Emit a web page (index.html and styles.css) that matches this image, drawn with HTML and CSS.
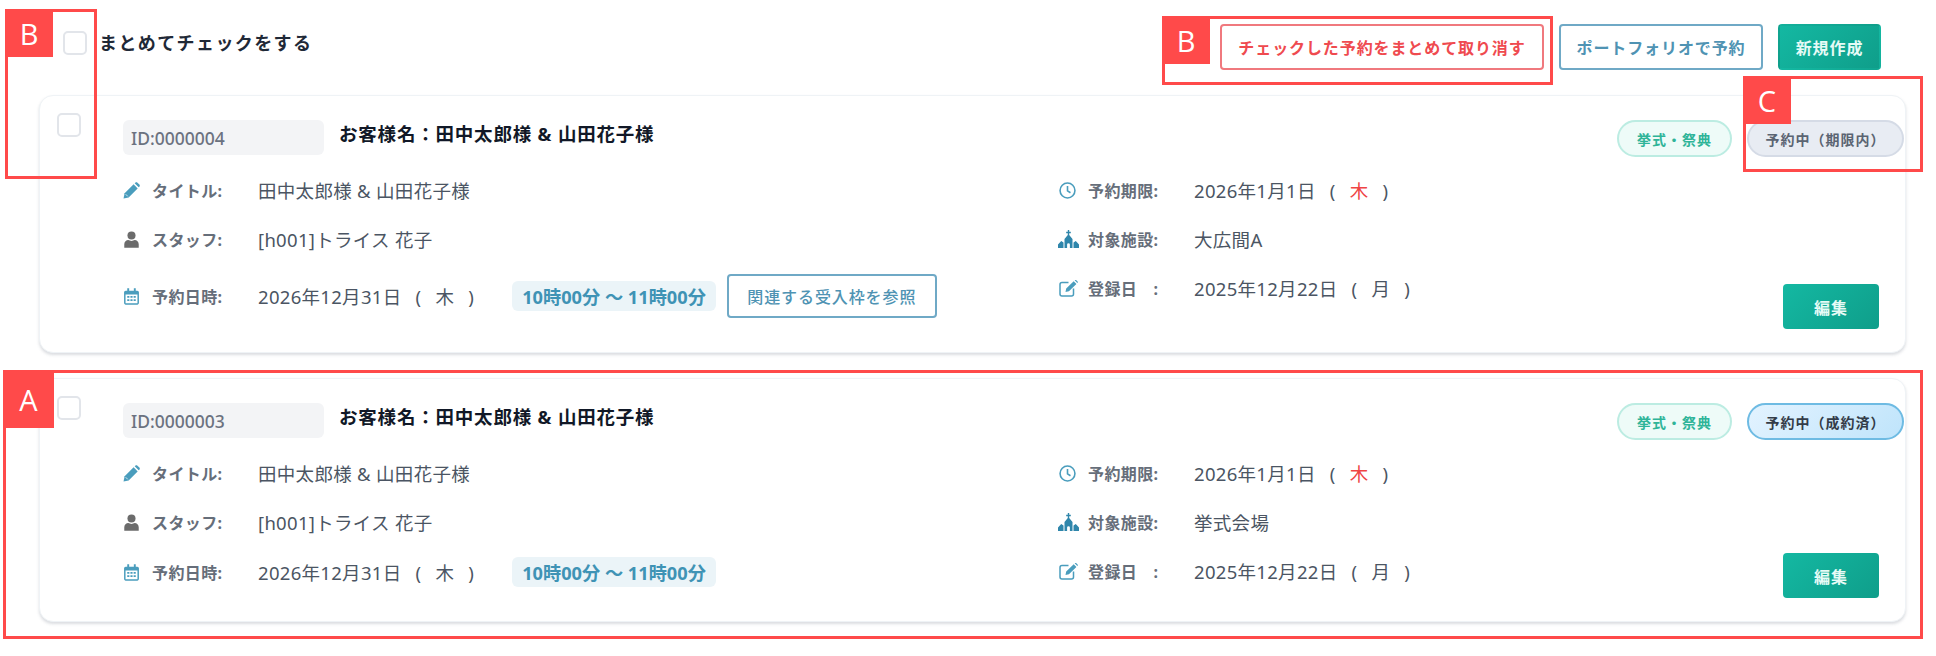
FILE: index.html
```html
<!DOCTYPE html>
<html lang="ja">
<head>
    <meta charset="UTF-8">
    <title>予約一覧</title>
    <link rel="stylesheet" href="styles.css">
</head>
<body>
    <svg class="sprite" xmlns="http://www.w3.org/2000/svg">
        <symbol id="i-pencil" viewBox="0 0 16 16">
            <path d="M.5 15.500l1-4.800L10 2.200l3.800 3.800-8.500 8.500z"/>
            <path d="M11 1.200l.6-.6c.6-.6 1.400-.6 2 0l1.800 1.800c.6.6.6 1.400 0 2l-.6.6z"/>
            <path d="M2.500 11.500l2 2" fill="none" stroke="#ffffff" stroke-width=".7"/>
        </symbol>
        <symbol id="i-user" viewBox="0 0 16 16">
            <circle cx="8" cy="4.200" r="3.800"/>
            <path d="M1.200 15.800v-3.300c0-2.400 1.800-4 3.800-4 .9.500 1.900.8 3 .8s2.100-.3 3-.8c2 0 3.800 1.600 3.800 4v3.300z"/>
        </symbol>
        <symbol id="i-calendar" viewBox="0 0 16 16">
            <path d="M4 .3h1.800v2.200H10.200V.3H12v2.200h1.500c.8 0 1.500.7 1.500 1.500v10.200c0 .8-.7 1.500-1.500 1.500h-11c-.8 0-1.500-.7-1.500-1.500V4c0-.8.700-1.500 1.500-1.500H4zM2.400 6.200v8.100h11.200V6.200z"/>
            <path d="M4 7.500h2v1.600H4zM7 7.500h2v1.600H7zM10 7.500h2v1.600h-2zM4 10.700h2v1.600H4zM7 10.700h2v1.600H7zM10 10.700h2v1.600h-2z"/>
        </symbol>
        <symbol id="i-clock" viewBox="0 0 16 16">
            <circle cx="8" cy="8" r="7" fill="none" stroke="currentColor" stroke-width="1.500"/>
            <path d="M8 3.800v4.500l2.800 1.800" fill="none" stroke="currentColor" stroke-width="1.500"/>
        </symbol>
        <symbol id="i-church" viewBox="0 0 21 18">
            <path d="M9.800 0h1.400v1.800h1.600v1.400h-1.600v1.700L14.500 9v9h-2.600v-3.400a1.400 1.400 0 0 0-2.800 0V18H6.500V9l3.300-4.100V3.200H8.200V1.800h1.600z"/>
            <path d="M0 14.500l3.200-3.500 2.300 1.500V18H0zM21 14.500L17.800 11l-2.300 1.500V18H21z"/>
        </symbol>
        <symbol id="i-edit" viewBox="0 0 19 17">
            <path d="M9.500 2.500H3C1.900 2.500 1 3.400 1 4.500V14c0 1.100.9 2 2 2h9.500c1.100 0 2-.9 2-2V8.500" fill="none" stroke="currentColor" stroke-width="1.500"/>
            <path d="M6.500 12l.7-3.400L14.700 1.200l2.700 2.700L9.900 11.300zM15.700.3l.4-.2c.4-.3.900-.2 1.200.1l1.300 1.300c.3.400.3.900 0 1.200l-.3.300z"/>
        </symbol>
    </svg>

    <main class="page">
        <div class="top-bar">
            <label class="check-all">
                <span class="check"></span>
                <span>まとめてチェックをする</span>
            </label>
            <div class="top-actions">
                <button class="btn btn-danger">チェックした予約をまとめて取り消す</button>
                <button class="btn btn-outline">ポートフォリオで予約</button>
                <button class="btn btn-primary">新規作成</button>
            </div>
        </div>

        <section class="card">
            <span class="check card-check"></span>
            <div class="card-main">
                <div class="card-head">
                    <span class="res-id">ID:0000004</span>
                    <h2 class="customer">お客様名&#xFF1A;田中太郎様 &amp; 山田花子様</h2>
                    <div class="badges">
                        <span class="badge badge-type">挙式・祭典</span>
                        <span class="badge badge-wait">予約中&#xFF08;期限内&#xFF09;</span>
                    </div>
                </div>
                <div class="card-body">
                    <div class="col">
                        <div class="row">
                            <svg class="ico ico-blue"><use href="#i-pencil"></use></svg>
                            <span class="label">タイトル:</span>
                            <span class="value">田中太郎様 &amp; 山田花子様</span>
                        </div>
                        <div class="row">
                            <svg class="ico ico-gray"><use href="#i-user"></use></svg>
                            <span class="label">スタッフ:</span>
                            <span class="value">[h001]トライス 花子</span>
                        </div>
                        <div class="row row-time">
                            <svg class="ico ico-blue"><use href="#i-calendar"></use></svg>
                            <span class="label">予約日時:</span>
                            <span class="value">2026年12月31日<span class="week">( 木 )</span></span>
                            <span class="time-pill">10時00分 〜 11時00分</span>
                            <button class="btn btn-outline btn-related">関連する受入枠を参照</button>
                        </div>
                    </div>
                    <div class="col">
                        <div class="row">
                            <svg class="ico ico-blue"><use href="#i-clock"></use></svg>
                            <span class="label">予約期限:</span>
                            <span class="value">2026年1月1日<span class="week">( <span class="red">木</span> )</span></span>
                        </div>
                        <div class="row">
                            <svg class="ico ico-church"><use href="#i-church"></use></svg>
                            <span class="label">対象施設:</span>
                            <span class="value">大広間A</span>
                        </div>
                        <div class="row">
                            <svg class="ico ico-blue ico-edit"><use href="#i-edit"></use></svg>
                            <span class="label">登録日&#x3000;:</span>
                            <span class="value">2025年12月22日<span class="week">( 月 )</span></span>
                        </div>
                    </div>
                    <button class="btn btn-primary btn-edit">編集</button>
                </div>
            </div>
        </section>

        <section class="card">
            <span class="check card-check"></span>
            <div class="card-main">
                <div class="card-head">
                    <span class="res-id">ID:0000003</span>
                    <h2 class="customer">お客様名&#xFF1A;田中太郎様 &amp; 山田花子様</h2>
                    <div class="badges">
                        <span class="badge badge-type">挙式・祭典</span>
                        <span class="badge badge-done">予約中&#xFF08;成約済&#xFF09;</span>
                    </div>
                </div>
                <div class="card-body">
                    <div class="col">
                        <div class="row">
                            <svg class="ico ico-blue"><use href="#i-pencil"></use></svg>
                            <span class="label">タイトル:</span>
                            <span class="value">田中太郎様 &amp; 山田花子様</span>
                        </div>
                        <div class="row">
                            <svg class="ico ico-gray"><use href="#i-user"></use></svg>
                            <span class="label">スタッフ:</span>
                            <span class="value">[h001]トライス 花子</span>
                        </div>
                        <div class="row row-time">
                            <svg class="ico ico-blue"><use href="#i-calendar"></use></svg>
                            <span class="label">予約日時:</span>
                            <span class="value">2026年12月31日<span class="week">( 木 )</span></span>
                            <span class="time-pill">10時00分 〜 11時00分</span>
                        </div>
                    </div>
                    <div class="col">
                        <div class="row">
                            <svg class="ico ico-blue"><use href="#i-clock"></use></svg>
                            <span class="label">予約期限:</span>
                            <span class="value">2026年1月1日<span class="week">( <span class="red">木</span> )</span></span>
                        </div>
                        <div class="row">
                            <svg class="ico ico-church"><use href="#i-church"></use></svg>
                            <span class="label">対象施設:</span>
                            <span class="value">挙式会場</span>
                        </div>
                        <div class="row">
                            <svg class="ico ico-blue ico-edit"><use href="#i-edit"></use></svg>
                            <span class="label">登録日&#x3000;:</span>
                            <span class="value">2025年12月22日<span class="week">( 月 )</span></span>
                        </div>
                    </div>
                    <button class="btn btn-primary btn-edit">編集</button>
                </div>
            </div>
        </section>
    </main>

    <!-- annotation frames drawn over the page -->
    <div class="note note-check"><span class="note-tag">B</span></div>
    <div class="note note-cancel"><span class="note-tag">B</span></div>
    <div class="note note-status"><span class="note-tag">C</span></div>
    <div class="note note-card"><span class="note-tag">A</span></div>
</body>
</html>
```

FILE: styles.css
```css
* {
    box-sizing: border-box;
}
body {
    margin: 0;
    position: relative;
    height: 656px;
    overflow: hidden;
    background-color: #ffffff;
    color: #4b5563;
    font-family: "Noto Sans", "Noto Sans CJK JP", sans-serif;
    font-size: 15px;
}
.sprite {
    display: none;
}
.page {
    padding: 24px 30px 0 39px;
}

/* top bar */
.top-bar {
    display: flex;
    justify-content: space-between;
    height: 46px;
    margin-bottom: 25px;
    padding: 0 25px 0 24px;
}
.check-all {
    display: flex;
    align-items: center;
    align-self: flex-start;
    gap: 12px;
    margin-top: 7px;
    color: #1f2937;
    font-size: 18px;
    font-weight: 700;
    line-height: 24px;
    letter-spacing: 1.4px;
}
.check {
    display: block;
    flex: none;
    width: 24px;
    height: 24px;
    border: 2px solid #e2e5ea;
    border-radius: 5px;
    background-color: #ffffff;
}
.top-actions {
    display: flex;
    gap: 15px;
}
.btn {
    height: 46px;
    padding: 0;
    border: 2px solid transparent;
    border-radius: 4px;
    background: none;
    font-family: inherit;
    font-size: 16px;
    font-weight: 700;
    letter-spacing: 0.9px;
}
.btn-danger {
    width: 324px;
    border-color: #f0797e;
    color: #ef4a4f;
}
.btn-outline {
    width: 204px;
    border-color: #6fa9c6;
    color: #4f93b3;
}
.btn-primary {
    width: 103px;
    background: linear-gradient(135deg, #14b8a2, #0f9e8a);
    color: #e6fbf6;
}

/* cards */
.card {
    display: flex;
    gap: 42px;
    margin-bottom: 25px;
    padding: 17px 1px 23px 17px;
    border: 1px solid #eff3f6;
    border-radius: 14px;
    background-color: #ffffff;
    box-shadow: 0 2px 3px rgba(90, 100, 120, 0.22);
}
.card-main {
    flex: 1;
    padding-top: 7px;
}
.card-head {
    display: flex;
    align-items: flex-start;
    height: 37px;
    margin-bottom: 22px;
}
.res-id {
    display: flex;
    align-items: center;
    width: 201px;
    height: 35px;
    padding-left: 8px;
    border-radius: 6px;
    background-color: #f3f4f6;
    color: #6b7280;
    font-size: 17.500px;
    font-weight: 500;
}
.customer {
    margin: 0 0 0 15px;
    color: #111827;
    font-size: 18.500px;
    font-weight: 700;
    line-height: 28px;
    letter-spacing: 0.8px;
}
.badges {
    display: flex;
    gap: 15px;
    margin-left: auto;
}
.badge {
    display: flex;
    align-items: center;
    justify-content: center;
    height: 37px;
    border: 2px solid transparent;
    border-radius: 19px;
    font-size: 14px;
    font-weight: 700;
    letter-spacing: 1px;
}
.badge-type {
    width: 115px;
    border-color: #bcece2;
    background-color: #eefbf8;
    color: #2fb498;
}
.badge-wait {
    width: 157px;
    border-color: #d5dbe6;
    background-color: #e8ecf3;
    color: #5b6472;
}
.badge-done {
    width: 157px;
    border-color: #6ebbe3;
    background: linear-gradient(135deg, #e3f3ff, #bfe4fb);
    color: #333c48;
}

/* card content */
.card-body {
    display: grid;
    grid-template-columns: 936px 1fr auto;
    align-items: start;
}
.col {
    display: flex;
    flex-direction: column;
    gap: 25px;
    margin-top: -1px;
    padding-bottom: 11px;
}
.row {
    display: flex;
    align-items: center;
    height: 24px;
}
.row-time {
    height: auto;
    min-height: 24px;
    margin-top: -2px;
}
.ico {
    flex: none;
    width: 17px;
    height: 17px;
    margin-right: 12px;
    fill: currentColor;
}
.ico-blue {
    color: #4a9dbd;
}
.ico-gray {
    color: #6b6b6b;
}
.ico-church {
    width: 21px;
    height: 18px;
    margin: 0 9px 0 -1px;
    color: #2f86ab;
}
.ico-edit {
    width: 19px;
    margin-right: 10px;
}
.label {
    flex: none;
    width: 106px;
    color: #666e7a;
    font-size: 16px;
    font-weight: 700;
    letter-spacing: 0.4px;
    white-space: pre;
}
.value {
    color: #4b5563;
    font-size: 18.500px;
    letter-spacing: 0.3px;
    white-space: pre;
}
.week {
    margin-left: 14px;
    word-spacing: 9px;
}
.red {
    color: #ef4444;
}
.time-pill {
    display: flex;
    align-items: center;
    height: 30px;
    margin-left: 38px;
    padding: 0 10px;
    border-radius: 6px;
    background-color: #ebf4f8;
    color: #3f93b5;
    font-size: 18.200px;
    font-weight: 700;
    white-space: nowrap;
}
.btn-related {
    width: 210px;
    height: 44px;
    margin-left: 11px;
    font-weight: 500;
}
.btn-edit {
    grid-column: 3;
    align-self: end;
    width: 96px;
    height: 45px;
    margin-right: 25px;
    border: none;
}

/* annotation frames */
.note {
    position: absolute;
    border: 3px solid #ff4a4a;
}
.note-tag {
    position: absolute;
    top: -3px;
    left: -3px;
    display: flex;
    align-items: center;
    justify-content: center;
    width: 48px;
    height: 48px;
    background-color: #ff4a4a;
    color: #ffffff;
    font-family: "Open Sans", sans-serif;
    font-size: 29px;
}
.note-check {
    left: 5px;
    top: 9px;
    width: 92px;
    height: 170px;
}
.note-cancel {
    left: 1162px;
    top: 16px;
    width: 391px;
    height: 69px;
}
.note-status {
    left: 1743px;
    top: 76px;
    width: 180px;
    height: 96px;
}
.note-card {
    left: 3px;
    top: 370px;
    width: 1920px;
    height: 269px;
}
.note-card .note-tag {
    width: 51px;
    height: 58px;
}
```
